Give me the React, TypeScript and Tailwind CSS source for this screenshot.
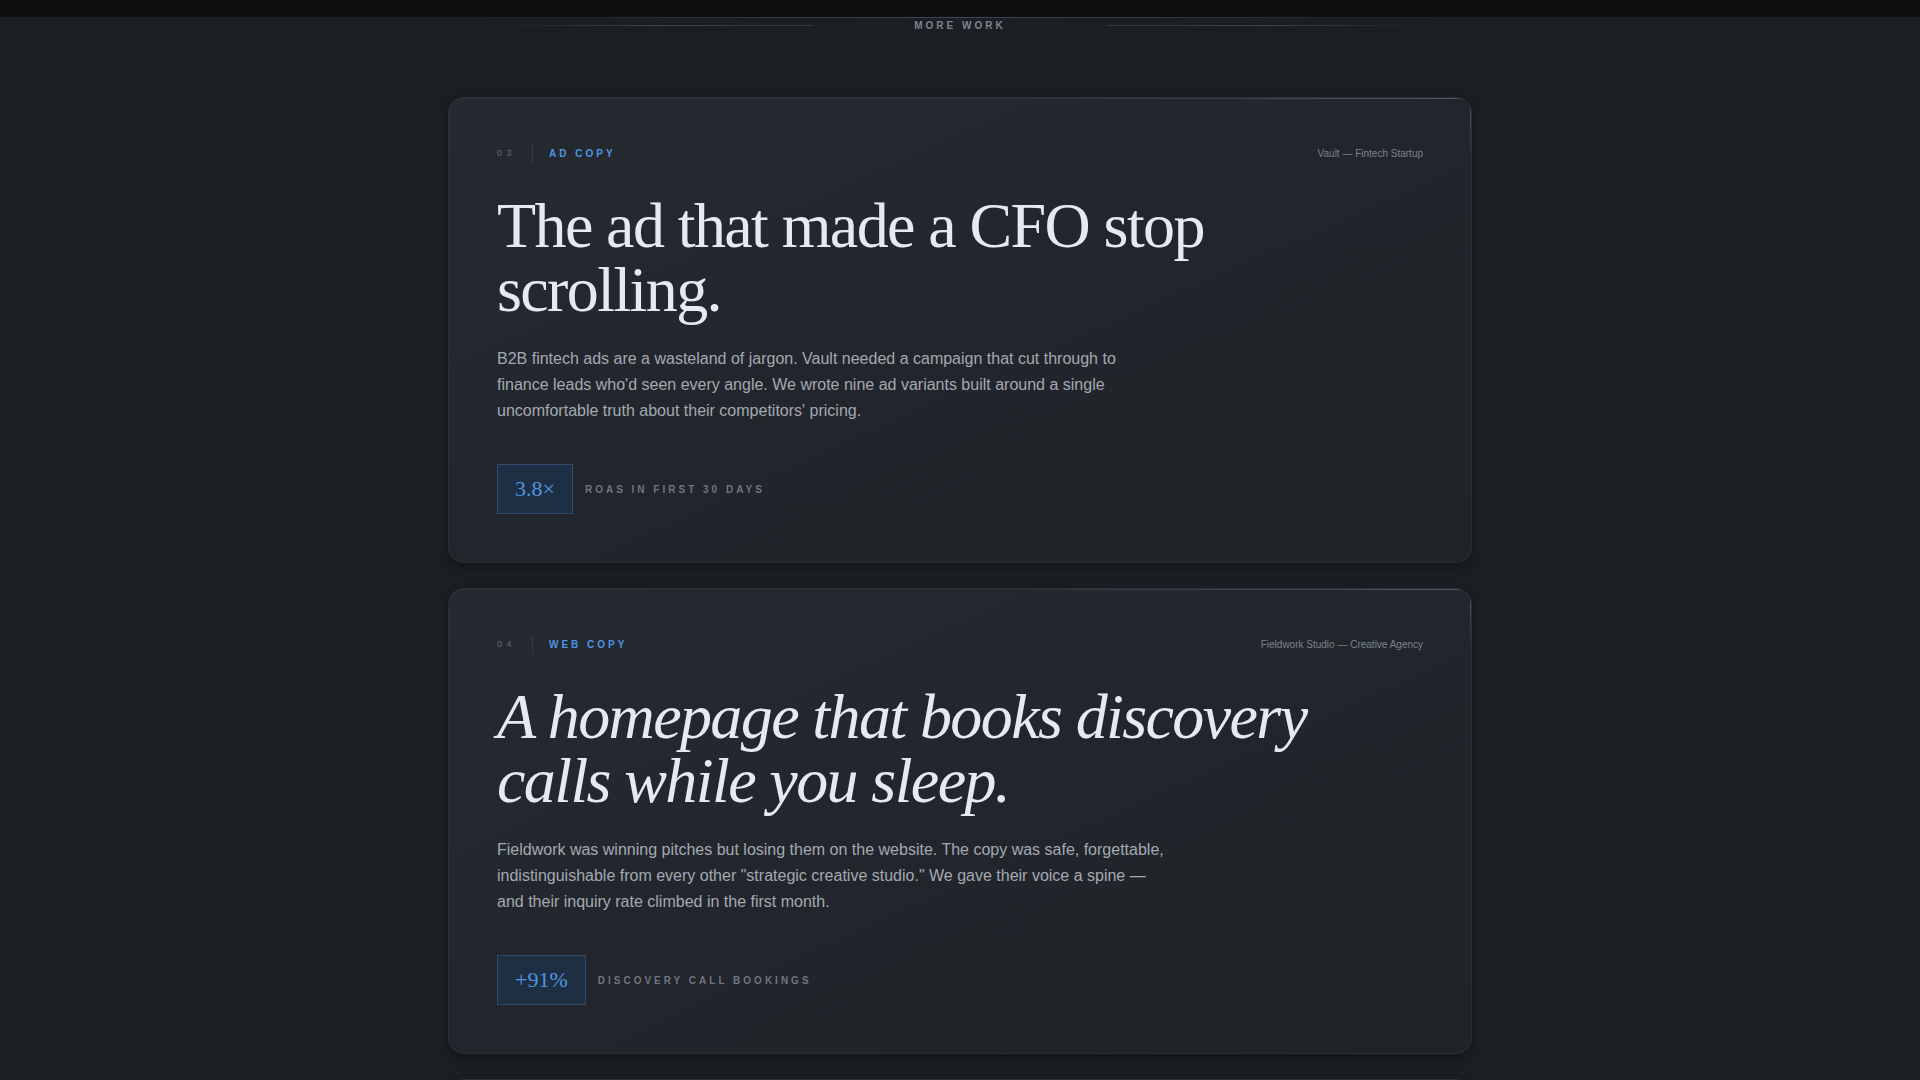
import React from "react";

type Work = {
  num: string;
  tag: string;
  client: string;
  title: string;
  italic: boolean;
  body: string;
  metric: string;
  metricLabel: string;
};

const works: Work[] = [
  {
    num: "03",
    tag: "AD COPY",
    client: "Vault — Fintech Startup",
    title: "The ad that made a CFO stop scrolling.",
    italic: false,
    body: "B2B fintech ads are a wasteland of jargon. Vault needed a campaign that cut through to finance leads who'd seen every angle. We wrote nine ad variants built around a single uncomfortable truth about their competitors' pricing.",
    metric: "3.8×",
    metricLabel: "ROAS IN FIRST 30 DAYS",
  },
  {
    num: "04",
    tag: "WEB COPY",
    client: "Fieldwork Studio — Creative Agency",
    title: "A homepage that books discovery calls while you sleep.",
    italic: true,
    body: "Fieldwork was winning pitches but losing them on the website. The copy was safe, forgettable, indistinguishable from every other \"strategic creative studio.\" We gave their voice a spine — and their inquiry rate climbed in the first month.",
    metric: "+91%",
    metricLabel: "DISCOVERY CALL BOOKINGS",
  },
];

const sans = { fontFamily: '"Liberation Sans", Arial, sans-serif' };
const serif = { fontFamily: '"Liberation Serif", "Times New Roman", serif' };

const cardClass =
  "relative overflow-hidden rounded-2xl border border-[#2b3037] bg-linear-to-br from-[#252a31] via-[#22262c] to-[#202328] p-12 shadow-[inset_0_1px_0_rgba(255,255,255,0.035),0_4px_10px_rgba(0,0,0,0.25)]";

function Highlights() {
  return (
    <>
      <div className="pointer-events-none absolute right-0 top-0 h-px w-1/2 bg-linear-to-r from-transparent to-[#4a5566]" />
      <div className="pointer-events-none absolute right-0 top-0 h-16 w-px bg-linear-to-b from-[#4a5566] to-transparent" />
    </>
  );
}

function Card({ w }: { w: Work }) {
  return (
    <article className={cardClass}>
      <Highlights />
      <div className="flex items-center justify-between" style={sans}>
        <div className="flex h-[14px] items-center gap-4">
          <span className="text-[9px] tracking-[0.5em] text-[#656c76]">{w.num}</span>
          <span className="h-[18px] w-px bg-[#343a42]" />
          <span className="text-[10px] font-bold tracking-[0.3em] text-[#4f94e0]">{w.tag}</span>
        </div>
        <span className="text-[10px] text-[#7b828c]">{w.client}</span>
      </div>
      <h2
        className={`mt-[33px] max-w-4xl text-[64px] leading-none tracking-[-0.025em] text-[#e6eaf0] ${w.italic ? "italic" : ""}`}
        style={serif}
      >
        {w.title}
      </h2>
      <p className="mt-6 max-w-2xl text-[16px] leading-[26px] text-[#a3a9b2]" style={sans}>
        {w.body}
      </p>
      <div className="mt-10 flex items-center gap-3">
        <div
          className="border border-[#2f4a6a] bg-[#1f2f43] px-[17px] py-[13px] text-[22px] leading-none text-[#4f94e0]"
          style={serif}
        >
          {w.metric}
        </div>
        <span className="text-[10px] font-bold tracking-[0.3em] text-[#6e757f]" style={sans}>
          {w.metricLabel}
        </span>
      </div>
    </article>
  );
}

export default function App() {
  return (
    <div className="min-h-screen bg-[#1b1e22]">
      <div className="h-[17px] bg-[#0d0f11]" />
      <section className="relative pb-24">
        <div className="pointer-events-none absolute left-1/2 top-0 h-px w-[1000px] -translate-x-1/2 bg-linear-to-r from-transparent via-[#3a4858] to-transparent" />
        <div className="flex h-[16px] items-center justify-center gap-[100px]">
          <span className="h-px w-[320px] bg-linear-to-r from-transparent via-[#3d434a] to-[#30353b]" />
          <span className="text-[10px] font-bold tracking-[0.3em] text-[#7d8590]" style={sans}>
            MORE WORK
          </span>
          <span className="h-px w-[320px] bg-linear-to-r from-[#30353b] via-[#3d434a] to-transparent" />
        </div>
        <div className="mx-auto mt-[64px] flex max-w-5xl flex-col gap-[25px]">
          {works.map((w) => (
            <Card key={w.num} w={w} />
          ))}
          <article className={`${cardClass} h-[460px]`}>
            <Highlights />
          </article>
        </div>
      </section>
    </div>
  );
}
